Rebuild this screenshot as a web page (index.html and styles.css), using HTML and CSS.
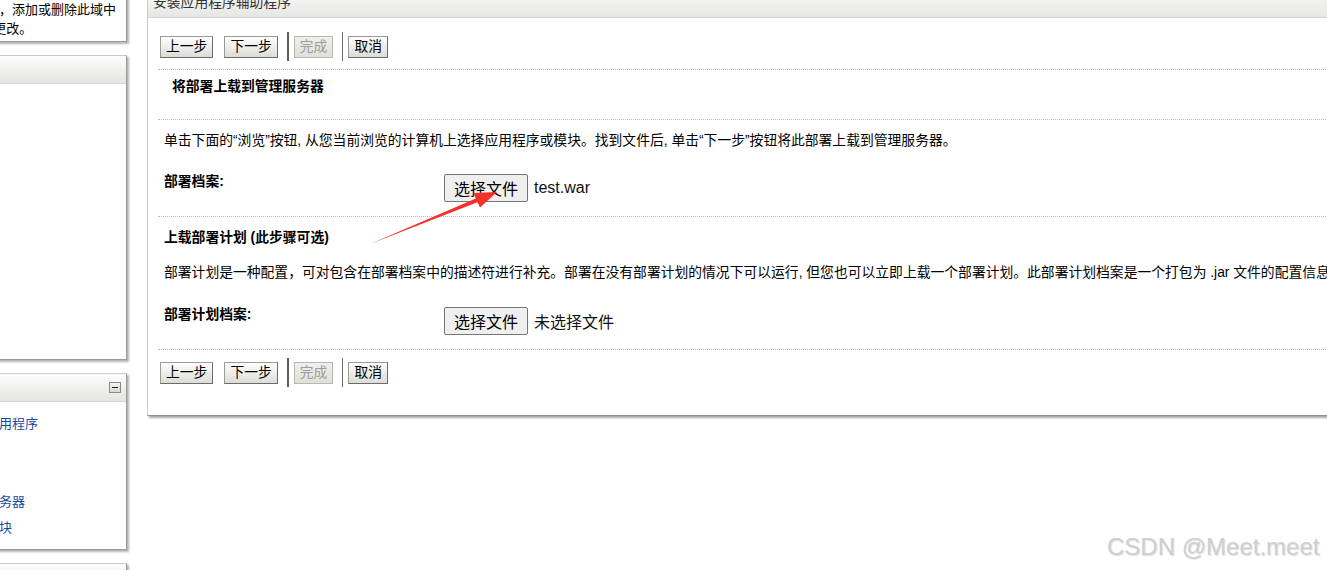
FILE: index.html
```html
<!DOCTYPE html>
<html lang="zh-CN">
<head>
  <meta charset="UTF-8">
  <meta name="viewport" content="width=device-width, initial-scale=1.0">
  <title>安装应用程序辅助程序</title>
  <link rel="stylesheet" href="styles.css">
</head>
<body>
  <div class="page">
    <div class="sidebar">
      <div class="box box-first">
        <div class="box-body note">
          <div>单击锁定并编辑按钮以修改，添加或删除此域中</div>
          <div>的各项设置, 保存后请激活更改。</div>
        </div>
      </div>
      <div class="box">
        <div class="box-head">更改</div>
        <div class="box-body tall"></div>
      </div>
      <div class="box">
        <div class="box-head">
          <span>结构</span>
          <span class="toggle"></span>
        </div>
        <ul class="box-links">
          <li><a href="#">安装新的企业应用程序</a></li>
          <li><a href="#">创建新域</a></li>
          <li><a href="#">配置集群</a></li>
          <li><a href="#">配置新的受管服务器</a></li>
          <li><a href="#">部署新的应用模块</a></li>
        </ul>
      </div>
      <div class="box">
        <div class="box-head">帮助</div>
      </div>
    </div>

    <div class="wizard">
      <div class="wizard-head">安装应用程序辅助程序</div>
      <div class="wizard-body">
        <div class="toolbar">
          <button class="btn">上一步</button>
          <button class="btn">下一步</button>
          <span class="sep sep-thick"></span>
          <button class="btn" disabled>完成</button>
          <span class="sep"></span>
          <button class="btn">取消</button>
        </div>
        <div class="divider"></div>
        <h3 class="step-title">将部署上载到管理服务器</h3>
        <div class="divider"></div>
        <p class="intro">单击下面的“浏览”按钮, 从您当前浏览的计算机上选择应用程序或模块。找到文件后, 单击“下一步”按钮将此部署上载到管理服务器。</p>
        <div class="field-row">
          <label class="field-label">部署档案:</label>
          <div class="file-pick">
            <button class="file-btn">选择文件</button>
            <span class="file-name">test.war</span>
          </div>
        </div>
        <div class="divider divider-gap"></div>
        <h4 class="sub-title">上载部署计划 (此步骤可选)</h4>
        <p class="plan-text">部署计划是一种配置，可对包含在部署档案中的描述符进行补充。部署在没有部署计划的情况下可以运行, 但您也可以立即上载一个部署计划。此部署计划档案是一个打包为 .jar 文件的配置信息集合，可在部署时使用。</p>
        <div class="field-row field-row-plan">
          <label class="field-label">部署计划档案:</label>
          <div class="file-pick">
            <button class="file-btn">选择文件</button>
            <span class="file-name">未选择文件</span>
          </div>
        </div>
        <div class="divider divider-gap"></div>
        <div class="toolbar toolbar-bottom">
          <button class="btn">上一步</button>
          <button class="btn">下一步</button>
          <span class="sep sep-thick"></span>
          <button class="btn" disabled>完成</button>
          <span class="sep"></span>
          <button class="btn">取消</button>
        </div>
      </div>
    </div>
  </div>

  <svg class="arrow" width="1327" height="570" viewBox="0 0 1327 570">
    <polygon points="370,244 475.8,198.5 473.6,193 497,192 480,207.5 477.4,202.3" fill="#f5302a"/>
  </svg>
  <div class="watermark">CSDN @Meet.meet</div>
</body>
</html>
```

FILE: styles.css
```css
/* General Styles */
body {
  margin: 0;
  font-family: "Liberation Sans", "Noto Sans CJK SC", sans-serif;
  font-size: 13px;
  color: #000;
  background-color: #fff;
  overflow: hidden;
}

.page {
  display: flex;
  align-items: flex-start;
  margin-top: -12px;
}

/* Sidebar Styles */
.sidebar {
  width: 300px;
  margin-left: -173px;
  flex: none;
}

.box {
  background-color: #fff;
  border: 1px solid #c9c9c9;
  border-right-color: #9a9a9a;
  border-bottom-color: #9a9a9a;
  box-shadow: 2px 2px 2px rgba(0, 0, 0, 0.3);
  margin-top: 13px;
}

.box-first {
  margin-top: 0;
  margin-bottom: 1px;
}

.box-head {
  display: flex;
  align-items: center;
  justify-content: space-between;
  height: 27px;
  padding: 0 5px 0 8px;
  background: linear-gradient(#fdfdfd, #e4e5e2);
  border-bottom: 1px solid #d6d7d3;
}

.note {
  padding: 11px 0 3px 15px;
  line-height: 19px;
  white-space: nowrap;
}

.tall {
  height: 275px;
}

.toggle {
  position: relative;
  width: 10px;
  height: 9px;
  border: 1px solid #8a8a84;
  background: linear-gradient(#f2f2ee, #d9d9d4);
}

.toggle::after {
  content: "";
  position: absolute;
  left: 2px;
  top: 4px;
  width: 6px;
  height: 1px;
  background-color: #222;
}

.box-links {
  list-style: none;
  margin: 0;
  padding: 9px 0 8px 80px;
  line-height: 26px;
  white-space: nowrap;
}

.box-links a {
  color: #1b4a9e;
  text-decoration: none;
}

/* Wizard Styles */
.wizard {
  flex: none;
  width: 1250px;
  margin-left: 20px;
  font-size: 13.8px;
  background-color: #fff;
  border: 1px solid #cbcbcb;
  border-bottom-color: #8f8f8f;
  box-shadow: 2px 2px 2px rgba(0, 0, 0, 0.35);
}

.wizard-head {
  height: 28px;
  line-height: 28px;
  padding-left: 5px;
  color: #333;
  background: linear-gradient(#fbfbfb, #e6e7e3);
  border-bottom: 1px solid #d5d6d2;
}

.wizard-body {
  padding-bottom: 28px;
}

.toolbar {
  display: flex;
  align-items: center;
  height: 29px;
  padding: 14px 0 0 12px;
}

.toolbar-bottom {
  padding-top: 8px;
}

.btn {
  height: 22px;
  padding: 0 5px;
  margin-right: 11px;
  font-family: inherit;
  font-size: 13.8px;
  line-height: 20px;
  color: #000;
  background: linear-gradient(#fefefe, #dcdcd7);
  border: 1px solid #9b9b95;
  border-right-color: #6c6c68;
  border-bottom-color: #6c6c68;
  border-radius: 0;
  cursor: pointer;
}

.btn:disabled {
  color: #9c9c98;
  background: linear-gradient(#efefeb, #e0e0db);
  border-color: #b8b8b3;
  cursor: default;
}

.sep {
  width: 1px;
  height: 29px;
  margin: 0 5px 0 -1px;
  background-color: #6a6a6a;
}

.sep-thick {
  width: 2px;
  margin-left: -2px;
  background-color: #5e5e5e;
}

.toolbar .sep + .btn {
  margin-right: 10px;
}

.divider {
  margin: 8px 0 0 10px;
  border-top: 1px dotted #bdbdbd;
}

.divider-gap {
  margin-top: 14px;
}

.step-title {
  margin: 0 0 23px;
  padding: 8px 0 0 24px;
  font-size: 13.8px;
  line-height: 18px;
}

.intro {
  margin: 11px 0 0;
  padding-left: 16px;
  line-height: 19px;
  white-space: nowrap;
}

.field-row {
  display: flex;
  align-items: flex-start;
  margin-top: 24px;
  padding-left: 16px;
}

.field-row-plan {
  margin-top: 25px;
}

.field-label {
  width: 280px;
  font-weight: bold;
  line-height: 16px;
}

.file-pick {
  display: flex;
  align-items: center;
  gap: 6px;
  font-size: 16px;
}

.file-btn {
  height: 28px;
  padding: 0 9px;
  font-family: inherit;
  font-size: 16px;
  color: #000;
  background-color: #efefef;
  border: 1px solid #767676;
  border-radius: 2px;
}

.file-name {
  color: #111;
}

.sub-title {
  margin: 12px 0 0;
  padding-left: 16px;
  font-size: 13.8px;
  line-height: 18px;
}

.plan-text {
  margin: 16px 0 0;
  padding-left: 16px;
  line-height: 19px;
  white-space: nowrap;
}

/* Overlays */
.arrow {
  position: absolute;
  left: 0;
  top: 0;
  pointer-events: none;
}

.watermark {
  position: absolute;
  left: 1107px;
  top: 532px;
  font-family: "Liberation Sans", sans-serif;
  font-size: 24px;
  line-height: 30px;
  color: #cfcfcf;
  text-shadow: 1px 1px 1px rgba(120, 120, 120, 0.25);
  white-space: nowrap;
}
```
